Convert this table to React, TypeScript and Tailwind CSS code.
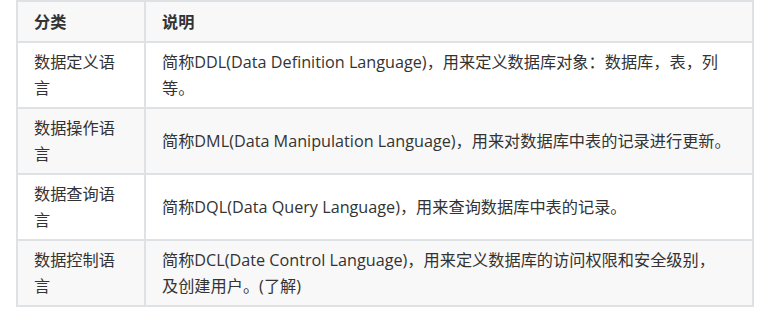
import type { ReactNode } from 'react';

const rows: { name: string; desc: ReactNode }[] = [
  {
    name: '数据定义语言',
    desc: '简称DDL(Data Definition Language)，用来定义数据库对象：数据库，表，列等。',
  },
  {
    name: '数据操作语言',
    desc: '简称DML(Data Manipulation Language)，用来对数据库中表的记录进行更新。',
  },
  {
    name: '数据查询语言',
    desc: '简称DQL(Data Query Language)，用来查询数据库中表的记录。',
  },
  {
    name: '数据控制语言',
    desc: (
      <>
        简称DCL(Date Control Language)，用来定义数据库的访问权限和安全级别，
        <br />
        及创建用户。(了解)
      </>
    ),
  },
];

export default function App() {
  return (
    <div
      className="bg-white pl-4 pr-[10px] text-[16.2px] leading-[26px] text-[#333]"
      style={{ fontFamily: '"Open Sans", "Noto Sans CJK SC", sans-serif' }}
    >
      <table className="w-[738px] table-fixed border-collapse">
        <colgroup>
          <col className="w-[128px]" />
          <col />
        </colgroup>
        <thead>
          <tr className="bg-[#f8f8f8]">
            <th className="border-2 border-[#dfe2e5] px-4 py-[6.5px] text-left font-bold">分类</th>
            <th className="border-2 border-[#dfe2e5] px-4 py-[6.5px] text-left font-bold">说明</th>
          </tr>
        </thead>
        <tbody>
          {rows.map((r, i) => (
            <tr key={r.name} className={i % 2 === 1 ? 'bg-[#f8f8f8]' : 'bg-white'}>
              <td className="border-2 border-[#dfe2e5] px-4 py-[6px] align-middle">{r.name}</td>
              <td className="border-2 border-[#dfe2e5] px-4 py-[6px] align-middle">{r.desc}</td>
            </tr>
          ))}
        </tbody>
      </table>
    </div>
  );
}
